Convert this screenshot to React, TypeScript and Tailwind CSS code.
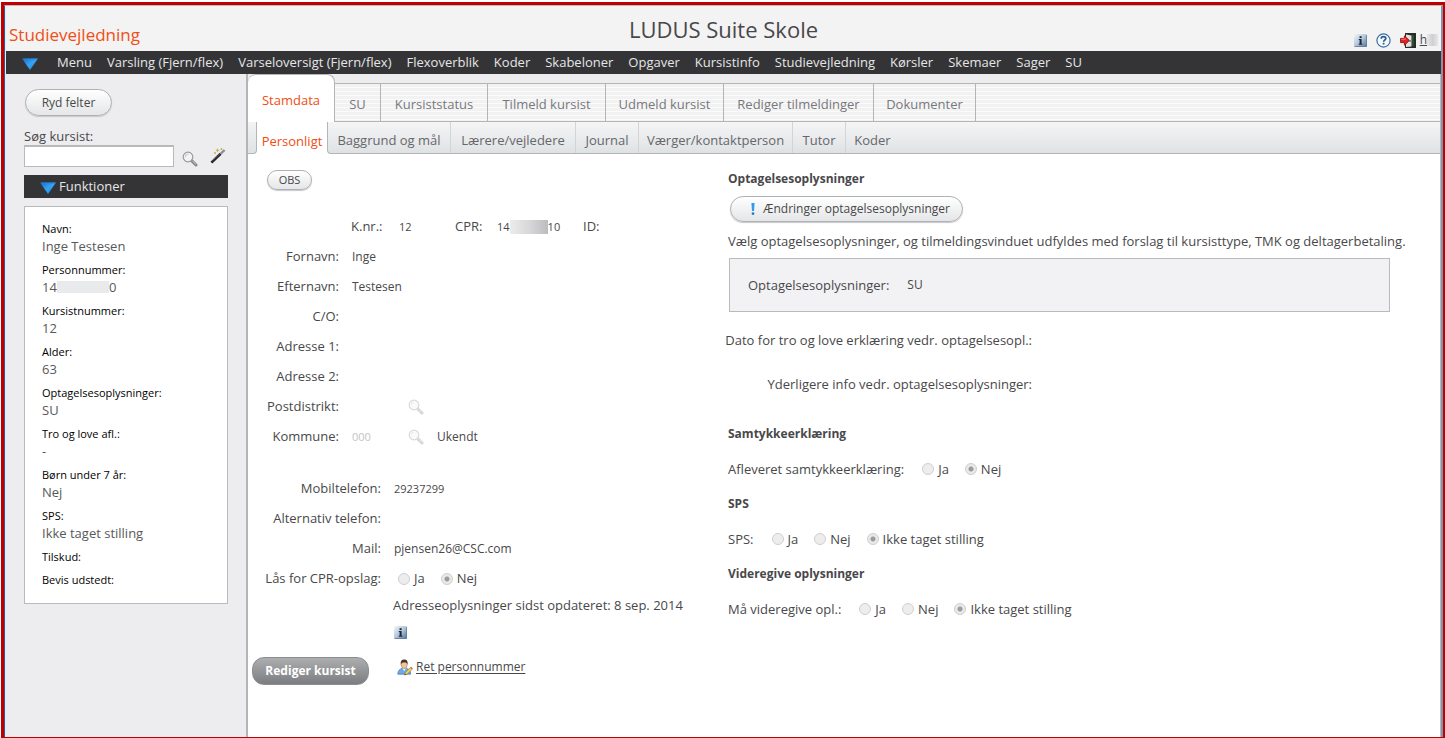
import { ReactNode, useState } from "react";

const menuItems = [
  "Menu",
  "Varsling (Fjern/flex)",
  "Varseloversigt (Fjern/flex)",
  "Flexoverblik",
  "Koder",
  "Skabeloner",
  "Opgaver",
  "Kursistinfo",
  "Studievejledning",
  "Kørsler",
  "Skemaer",
  "Sager",
  "SU",
];

const mainTabs = [
  { label: "SU", width: "w-[46px]" },
  { label: "Kursiststatus", width: "w-[107px]" },
  { label: "Tilmeld kursist", width: "w-[118px]" },
  { label: "Udmeld kursist", width: "w-[118px]" },
  { label: "Rediger tilmeldinger", width: "w-[150px]" },
  { label: "Dokumenter", width: "w-[102px]" },
];

const subTabs = [
  { label: "Baggrund og mål", width: "w-[123px]" },
  { label: "Lærere/vejledere", width: "w-[125px]" },
  { label: "Journal", width: "w-[63px]" },
  { label: "Værger/kontaktperson", width: "w-[154px]" },
  { label: "Tutor", width: "w-[53px]" },
  { label: "Koder", width: "w-[53px]" },
];

const facts: { label: string; value?: ReactNode }[] = [
  { label: "Navn:", value: "Inge Testesen" },
  {
    label: "Personnummer:",
    value: (
      <span className="flex items-center">
        14
        <span className="h-3 w-[52px] bg-[#e9eaec]" />0
      </span>
    ),
  },
  { label: "Kursistnummer:", value: "12" },
  { label: "Alder:", value: "63" },
  { label: "Optagelsesoplysninger:", value: "SU" },
  { label: "Tro og love afl.:", value: "-" },
  { label: "Børn under 7 år:", value: "Nej" },
  { label: "SPS:", value: "Ikke taget stilling" },
  { label: "Tilskud:" },
  { label: "Bevis udstedt:" },
];

function BlueArrow() {
  return (
    <svg width="16" height="12" viewBox="0 0 16 12" className="mt-0.5 shrink-0" aria-hidden="true">
      <defs>
        <linearGradient id="arrow" x1="0" y1="0" x2="1" y2="1">
          <stop offset="0" stopColor="#1668c8" />
          <stop offset="0.5" stopColor="#35a4f5" />
          <stop offset="1" stopColor="#1a7be0" />
        </linearGradient>
      </defs>
      <path d="M0 0.5H16L8 12Z" fill="url(#arrow)" />
      <path d="M1.5 1.2H14.5" stroke="#2a86e2" strokeWidth="1" />
    </svg>
  );
}

function Magnifier() {
  return (
    <svg width="16" height="16" viewBox="0 0 16 16" aria-hidden="true">
      <path d="M9.6 9.6L14 14" stroke="#85878a" strokeWidth="3" strokeLinecap="round" />
      <path d="M10.4 10L13.8 13.4" stroke="#c9cacc" strokeWidth="1" />
      <circle cx="6" cy="6" r="4.8" fill="#f1f3f5" stroke="#97999c" strokeWidth="1.2" />
      <path d="M3.2 6.2A3 3 0 0 1 6.2 3.2" fill="none" stroke="#c3c7cb" strokeWidth="1" />
    </svg>
  );
}

function Wand() {
  return (
    <svg width="16" height="16" viewBox="0 0 16 16" aria-hidden="true">
      <path d="M1.4 14.6L10.6 5.8" stroke="#222" strokeWidth="2.6" />
      <path d="M2.4 12.8L9.8 5.8" stroke="#777" strokeWidth="0.7" />
      <path d="M10.8 5.6L14.6 2" stroke="#8d8f93" strokeWidth="2.4" />
      <path d="M7.5 0.6V4M5.8 2.3H9.2M11.4 0V2M10.4 1H12.4M5 4V6M4 5H6" stroke="#cba94a" strokeWidth="0.9" />
    </svg>
  );
}

function InfoIcon() {
  return (
    <svg width="13" height="13" viewBox="0 0 13 13" aria-hidden="true">
      <defs>
        <linearGradient id="info" x1="0" y1="0" x2="1" y2="1">
          <stop offset="0" stopColor="#f3f7fa" />
          <stop offset="0.5" stopColor="#b4c6d8" />
          <stop offset="1" stopColor="#4d7096" />
        </linearGradient>
      </defs>
      <rect width="13" height="13" rx="1.5" fill="url(#info)" />
      <path d="M0.5 12.5H12.5V1" fill="none" stroke="#5f7d9c" strokeWidth="0.8" />
      <rect x="5.6" y="2.2" width="2" height="1.8" fill="#18283c" />
      <path d="M4.8 5H7.6V9.8H8.4V10.8H4.8V9.8H5.6V6H4.8Z" fill="#18283c" />
    </svg>
  );
}

function HelpIcon() {
  return (
    <svg width="15" height="15" viewBox="0 0 15 15" aria-hidden="true">
      <circle cx="7.5" cy="7.5" r="6.6" fill="#f4f9fd" stroke="#3b6ea5" strokeWidth="1.2" />
      <path d="M5.2 5.8C5.2 4.4 6.2 3.7 7.5 3.7S9.8 4.5 9.8 5.6C9.8 7 7.6 7 7.6 8.8" fill="none" stroke="#2c5a90" strokeWidth="1.7" />
      <rect x="6.7" y="9.8" width="1.8" height="1.7" fill="#2c5a90" />
    </svg>
  );
}

function ExitIcon() {
  return (
    <svg width="16" height="15" viewBox="0 0 16 15" aria-hidden="true">
      <rect x="5.5" y="0.5" width="10" height="14" fill="#1f2f1f" stroke="#2b2b2b" />
      <path d="M6 1.5L11.5 2.5V13.5L6 14Z" fill="#dfe1e2" />
      <path d="M13 2V13" stroke="#4c6b3a" strokeWidth="1" />
      <rect x="9.6" y="7" width="1" height="2" fill="#555" />
      <path d="M0.6 5.4H4.4V2.8L9.4 7.5L4.4 12.2V9.6H0.6Z" fill="#e62222" stroke="#8e0d0d" strokeWidth="0.9" />
      <path d="M1.4 6.3H5.2V4.9" fill="none" stroke="#ff8d83" strokeWidth="0.8" />
    </svg>
  );
}

function PersonEditIcon() {
  return (
    <svg width="16" height="17" viewBox="0 0 16 17" aria-hidden="true">
      <path d="M0.8 15.2C0.8 11.4 3 10 5 9.4H9.4C11.8 10 13.6 11.4 13.6 15.2Z" fill="#6ea8e6" stroke="#3f76b8" strokeWidth="0.7" />
      <path d="M5.4 9.2L7.2 12L9 9.2Z" fill="#fff" />
      <ellipse cx="7.2" cy="5.6" rx="3.1" ry="3.9" fill="#f0c59a" stroke="#9a6a3c" strokeWidth="0.5" />
      <path d="M3.8 5.4C3.4 1.8 5 0.6 7.2 0.6S11 1.8 10.6 5.4C10 3.6 9 3.4 7.2 3.4S4.4 3.8 3.8 5.4Z" fill="#4b3526" />
      <path d="M7.6 16L8.4 13.6L13.4 8.4L15.2 10.2L10 15.2Z" fill="#f2d25a" stroke="#8a7430" strokeWidth="0.6" />
      <path d="M13.4 8.4L15.2 10.2L15.8 9.4L14.2 7.8Z" fill="#d9534f" />
      <path d="M7.4 16.3L8.1 14.7L9 15.6Z" fill="#222" />
    </svg>
  );
}

function Field({ label, labelWidth, children }: { label: string; labelWidth: string; children?: ReactNode }) {
  return (
    <div className="flex h-[30px] items-center gap-[13px] whitespace-nowrap">
      <span className={`${labelWidth} text-right`}>{label}</span>
      <div className="flex items-center gap-[13px] text-xs">{children}</div>
    </div>
  );
}

function Choices({ name, label, options, selected }: { name: string; label: string; options: string[]; selected: string }) {
  return (
    <div role="radiogroup" aria-label={label} className="flex items-center gap-4 text-[13px]">
      {options.map((option) => (
        <label key={option} className="flex items-center gap-1 whitespace-nowrap">
          <input
            type="radio"
            name={name}
            disabled
            defaultChecked={option === selected}
            className="size-3 appearance-none rounded-full border border-[#cfcfd1] bg-[#ededee] checked:bg-[radial-gradient(circle,#9b9b9d_0_2px,#e9e9ea_3px)]"
          />
          {option}
        </label>
      ))}
    </div>
  );
}

const pill =
  "flex items-center justify-center whitespace-nowrap rounded-full border border-[#b0b1b4] bg-linear-to-b from-white to-[#e4e6e7] shadow-[0_1px_1px_#c8c8ca]";

export default function App() {
  const [search, setSearch] = useState("");
  const yesNo = ["Ja", "Nej"];
  const yesNoUndecided = ["Ja", "Nej", "Ikke taget stilling"];

  return (
    <div className="flex min-h-screen flex-col bg-white pt-0.5 pl-px font-['Open_Sans','Noto_Sans',sans-serif] text-[13px] text-[#48484a]">
      <div className="flex flex-1 flex-col border-t-[3px] border-r-2 border-b border-l-[3px] border-[#c00000]">
        <div className="flex flex-1 flex-col border-t border-r-2 border-l border-t-[#b9babc] border-r-[#7f95ad] border-l-[#2c5a9b] bg-[#ededef] pl-px">
          <header className="grid h-[45px] grid-cols-[1fr_auto_1fr] bg-[#f3f3f4] px-[3px]">
            <h2 className="self-end pb-1 text-[17px] leading-6 font-medium text-[#f04e13]">Studievejledning</h2>
            <h1 className="self-center text-[22px] leading-7 text-[#48484a]">LUDUS Suite Skole</h1>
            <div className="flex items-center justify-end gap-[9px] self-end pb-[3px]">
              <button type="button" aria-label="Information"><InfoIcon /></button>
              <button type="button" aria-label="Hjælp"><HelpIcon /></button>
              <a href="#log-ud" className="flex items-center gap-1 text-xs leading-4">
                <ExitIcon />
                <span className="flex items-center">
                  <span className="underline">h</span>
                  <span className="h-3 w-[11px] bg-linear-to-r from-[#e6e6e7] via-[#d0d0d2] to-[#e6e6e7]" />
                </span>
              </a>
            </div>
          </header>

          <nav aria-label="Hovedmenu" className="flex h-[23px] items-center bg-[#343436] pl-4 text-[#e6e6e7]">
            <BlueArrow />
            <ul className="flex gap-[15px] pl-[19px] whitespace-nowrap">
              {menuItems.map((item) => (
                <li key={item}>
                  <a href={`#${item}`}>{item}</a>
                </li>
              ))}
            </ul>
          </nav>

          <div className="flex flex-1">
            <aside className="w-60 shrink-0 px-[18px] pt-[15px]">
              <button type="button" className={`${pill} ml-px h-[27px] w-[87px] text-xs`}>Ryd felter</button>
              <label htmlFor="search" className="mt-[11px] block leading-[18px]">Søg kursist:</label>
              <div className="flex items-end">
                <input
                  id="search"
                  value={search}
                  onChange={(event) => setSearch(event.target.value)}
                  className="h-[22px] w-[150px] border border-t-2 border-[#b8b9bb] bg-white px-1 outline-none"
                />
                <button type="button" aria-label="Søg" className="ml-2"><Magnifier /></button>
                <button type="button" aria-label="Avanceret søgning" className="mb-[3px] ml-3"><Wand /></button>
              </div>
              <button type="button" className="mt-2 flex h-[23px] w-full items-center gap-[3px] bg-[#343436] pl-4 text-[#e6e6e7]">
                <BlueArrow />
                Funktioner
              </button>
              <dl className="mt-2 flex flex-col gap-[5px] border border-[#b9babc] bg-white px-[17px] pt-[13px] pb-[14px]">
                {facts.map((fact) => (
                  <div key={fact.label}>
                    <dt className="text-[11px] leading-[18px] text-black">{fact.label}</dt>
                    {fact.value && <dd className="pb-0.5 leading-4 text-[#58585a]">{fact.value}</dd>}
                  </div>
                ))}
              </dl>
            </aside>

            <main className="min-w-0 flex-1 border-r border-l-2 border-r-[#b9babc] border-l-[#b4b5b7] bg-white">
              <div role="tablist" aria-label="Kursist" className="flex h-12 items-end bg-[#ededef] text-[#77787c]">
                <button
                  type="button"
                  role="tab"
                  aria-selected="true"
                  className="h-12 w-[87px] rounded-t-lg border-t border-r border-[#b4b5b7] bg-white pt-1 text-[#f04e13]"
                >
                  Stamdata
                </button>
                <div className="flex h-[39px] flex-1 border-y border-[#b4b5b7] bg-[repeating-linear-gradient(#f2f2f3_0_3px,#fbfbfb_3px_4px)]">
                  {mainTabs.map((tab) => (
                    <button
                      key={tab.label}
                      type="button"
                      role="tab"
                      aria-selected="false"
                      className={`${tab.width} border-r border-[#b4b5b7] pt-1 whitespace-nowrap`}
                    >
                      {tab.label}
                    </button>
                  ))}
                </div>
              </div>

              <div role="tablist" aria-label="Stamdata" className="flex h-8 text-[#66676b]">
                <div className="w-[9px] rounded-br-sm border-r border-b border-[#b4b5b7] bg-linear-to-b from-[#f3f3f4] to-[#dfe2e3]" />
                <button type="button" role="tab" aria-selected="true" className="w-[70px] pt-[7px] text-[#f04e13]">
                  Personligt
                </button>
                <div className="flex flex-1 rounded-bl-sm border-b border-l border-[#b4b5b7] bg-linear-to-b from-[#f5f5f6] to-[#dfe2e3]">
                  {subTabs.map((tab) => (
                    <button
                      key={tab.label}
                      type="button"
                      role="tab"
                      aria-selected="false"
                      className={`${tab.width} border-r border-[#d2d4d6] pt-[7px] whitespace-nowrap last:border-r-0`}
                    >
                      {tab.label}
                    </button>
                  ))}
                </div>
              </div>

              <div className="grid grid-cols-[480px_minmax(0,662px)]">
                <section aria-label="Personligt">
                  <button type="button" className={`${pill} mt-4 ml-[19px] h-5 w-[45px] text-[11px]`}>OBS</button>
                  <div className="mt-[22px] grid h-[30px] grid-cols-[48px_56px_42px_86px_auto] items-center pl-[103px]">
                    <span>K.nr.:</span>
                    <span className="text-[11px]">12</span>
                    <span>CPR:</span>
                    <span className="flex items-center text-[11px]">
                      14
                      <span className="h-3.5 w-[38px] bg-linear-to-r from-[#ececed] via-[#d8d8da] to-[#bcbcbe]" />
                      10
                    </span>
                    <span>ID:</span>
                  </div>
                  <Field label="Fornavn:" labelWidth="w-[91px]">Inge</Field>
                  <Field label="Efternavn:" labelWidth="w-[91px]">Testesen</Field>
                  <Field label="C/O:" labelWidth="w-[91px]" />
                  <Field label="Adresse 1:" labelWidth="w-[91px]" />
                  <Field label="Adresse 2:" labelWidth="w-[91px]" />
                  <Field label="Postdistrikt:" labelWidth="w-[91px]">
                    <button type="button" disabled aria-label="Søg postdistrikt" className="ml-14 opacity-35"><Magnifier /></button>
                  </Field>
                  <Field label="Kommune:" labelWidth="w-[91px]">
                    <span className="w-[43px] text-[11px] text-[#c4c4c6]">000</span>
                    <button type="button" disabled aria-label="Søg kommune" className="opacity-35"><Magnifier /></button>
                    <span>Ukendt</span>
                  </Field>

                  <div className="mt-[22px]">
                    <Field label="Mobiltelefon:" labelWidth="w-[133px]">
                      <span className="text-[11px]">29237299</span>
                    </Field>
                    <Field label="Alternativ telefon:" labelWidth="w-[133px]" />
                    <Field label="Mail:" labelWidth="w-[133px]">pjensen26@CSC.com</Field>
                    <Field label="Lås for CPR-opslag:" labelWidth="w-[133px]">
                      <div className="pl-1">
                        <Choices name="lock" label="Lås for CPR-opslag" options={yesNo} selected="Nej" />
                      </div>
                    </Field>
                  </div>
                  <p className="flex h-6 items-center pl-[145px]">Adresseoplysninger sidst opdateret: 8 sep. 2014</p>
                  <div className="flex h-7 items-center pl-[146px]">
                    <button type="button" aria-label="Information om adresse"><InfoIcon /></button>
                  </div>
                  <div className="mt-[11px] flex gap-7 pl-1 text-xs">
                    <button
                      type="button"
                      className="h-7 w-[117px] rounded-[12px] border border-[#8c8d90] bg-linear-to-b from-[#adaeb0] to-[#7c7d80] font-bold text-white"
                    >
                      Rediger kursist
                    </button>
                    <a href="#ret-personnummer" className="flex h-5 items-center gap-[3px]">
                      <PersonEditIcon />
                      <span className="underline underline-offset-2">Ret personnummer</span>
                    </a>
                  </div>
                </section>

                <section aria-label="Optagelse og samtykke" className="pt-4 leading-[18px]">
                  <h3 className="text-xs leading-[18px] font-bold">Optagelsesoplysninger</h3>
                  <button type="button" className={`${pill} mt-2 ml-0.5 h-[26px] w-[233px] gap-2 pl-2 text-xs`}>
                    <svg width="4" height="12" viewBox="0 0 4 12" aria-hidden="true">
                      <path d="M0.4 0H3.6L3 8H1Z" fill="#2f9bf0" />
                      <rect x="0.8" y="9.4" width="2.4" height="2.4" fill="#1f74cc" />
                    </svg>
                    Ændringer optagelsesoplysninger
                  </button>
                  <p className="mt-[10px] whitespace-nowrap">
                    Vælg optagelsesoplysninger, og tilmeldingsvinduet udfyldes med forslag til kursisttype, TMK og deltagerbetaling.
                  </p>
                  <div className="mt-2 ml-px flex h-[54px] items-center gap-[18px] border border-[#b9babc] bg-[#f2f2f4] pl-[18px]">
                    <span>Optagelsesoplysninger:</span>
                    <span className="text-xs">SU</span>
                  </div>
                  <div className="w-[304px] text-right whitespace-nowrap">
                    <p className="mt-[19px] flex justify-end">Dato for tro og love erklæring vedr. optagelsesopl.:</p>
                    <p className="mt-[26px]">Yderligere info vedr. optagelsesoplysninger:</p>
                  </div>

                  <h3 className="mt-8 text-xs leading-[18px] font-bold">Samtykkeerklæring</h3>
                  <div className="mt-[17px] flex gap-[18px]">
                    <span>Afleveret samtykkeerklæring:</span>
                    <Choices name="consent" label="Afleveret samtykkeerklæring" options={yesNo} selected="Nej" />
                  </div>
                  <h3 className="mt-[17px] text-xs leading-[18px] font-bold">SPS</h3>
                  <div className="mt-[17px] flex gap-[18px]">
                    <span>SPS:</span>
                    <Choices name="sps" label="SPS" options={yesNoUndecided} selected="Ikke taget stilling" />
                  </div>
                  <h3 className="mt-[17px] text-xs leading-[18px] font-bold">Videregive oplysninger</h3>
                  <div className="mt-[17px] flex gap-[18px]">
                    <span>Må videregive opl.:</span>
                    <Choices name="share" label="Må videregive oplysninger" options={yesNoUndecided} selected="Ikke taget stilling" />
                  </div>
                </section>
              </div>
            </main>
          </div>
        </div>
      </div>
    </div>
  );
}
